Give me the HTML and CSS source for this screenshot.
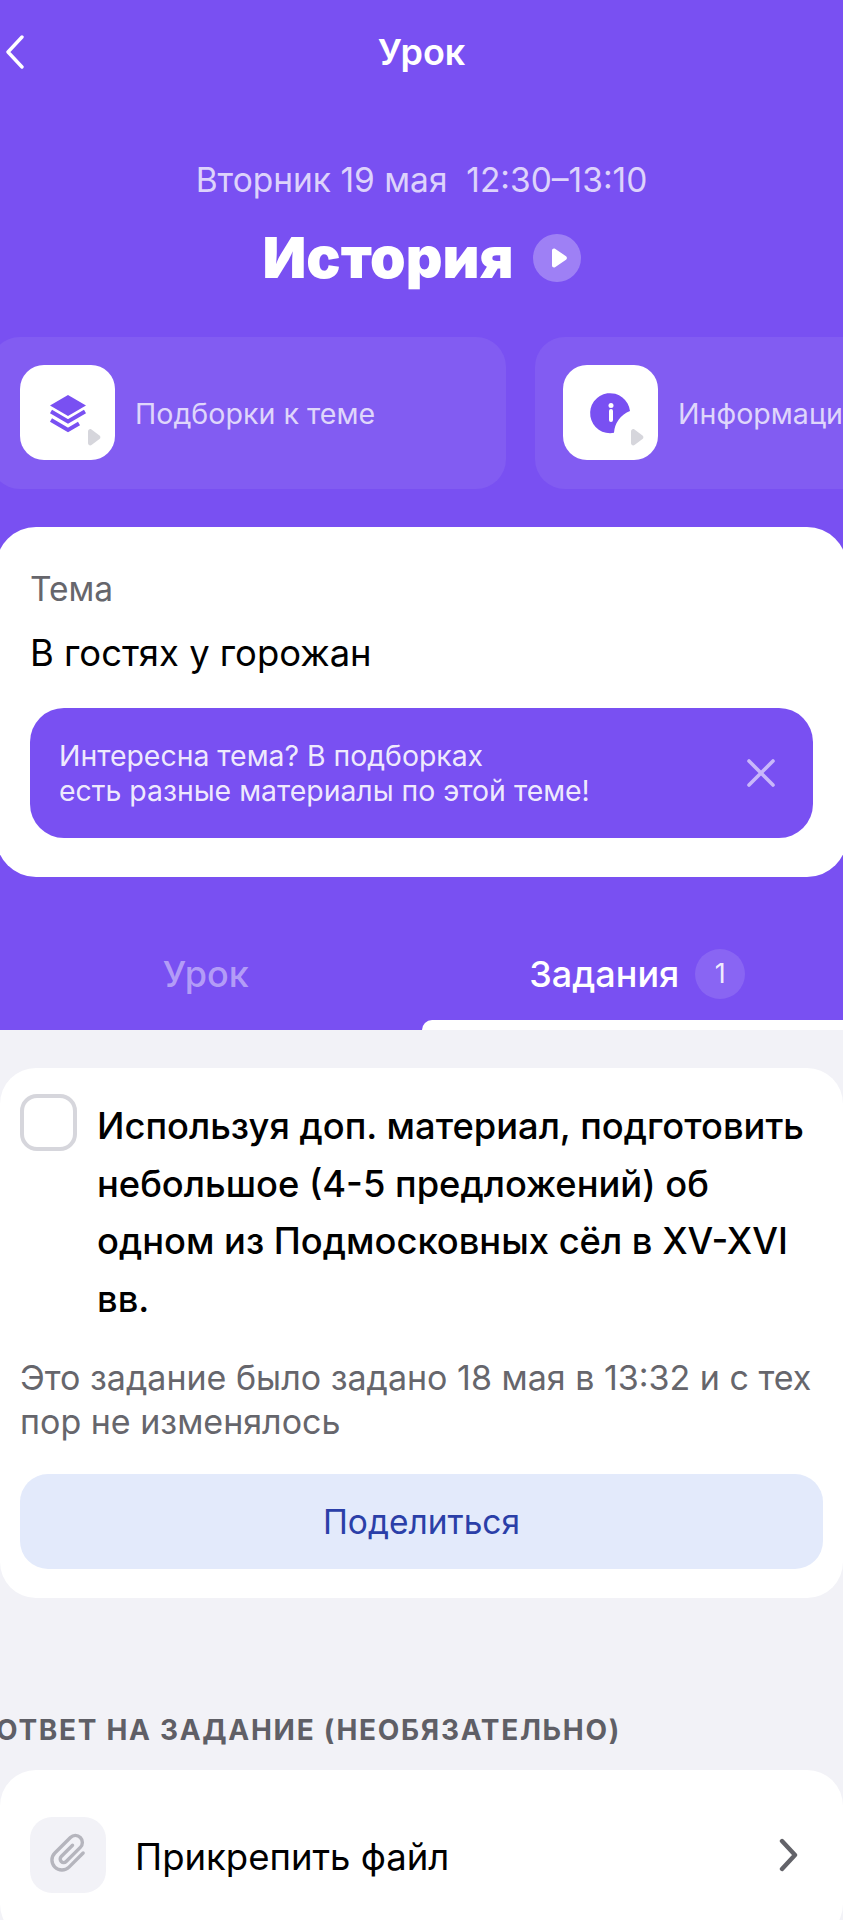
FILE: index.html
```html
<!DOCTYPE html>
<html lang="ru">
<head>
  <meta charset="UTF-8">
  <meta name="viewport" content="width=device-width, initial-scale=1.0">
  <title>Урок</title>
  <link rel="stylesheet" href="styles.css">
</head>
<body>
  <div class="hero">
    <div class="topbar">
      <svg class="back" width="20" height="34" viewBox="0 0 20 34"><path d="M17 2 3 17l14 15" fill="none" stroke="#fff" stroke-width="3.4" stroke-linecap="round" stroke-linejoin="round"/></svg>
      <span class="topbar-title">Урок</span>
    </div>
    <p class="lesson-date">Вторник 19 мая&nbsp; 12:30–13:10</p>
    <div class="subject">
      <h1>История</h1>
      <span class="subject-play">
        <svg width="48" height="48" viewBox="0 0 48 48"><path d="M19 16.500c0-1.600 1.700-2.500 3-1.700l11 7.400c1.200.8 1.200 2.700 0 3.500l-11 7.500c-1.300.8-3-.1-3-1.700z" fill="#fff"/></svg>
      </span>
    </div>
    <div class="shortcuts">
      <div class="shortcut shortcut-first">
        <div class="tile">
          <svg width="95" height="95" viewBox="0 0 95 95">
            <path d="M48 30 66 40.500 48 51 30 40.500z" fill="#7950f2"/>
            <path d="M31 46.500 48 56.500 65 46.500M31 55 48 65 59 58.500" fill="none" stroke="#7950f2" stroke-width="4"/>
            <path d="M68 66.500c0-2 2-3 3.500-2l8 6c1.200 1 1.200 2.500 0 3.500l-8 6c-1.500 1-3.500 0-3.500-2z" fill="#d6d6dc"/>
          </svg>
        </div>
        <span class="shortcut-label">Подборки к теме</span>
      </div>
      <div class="shortcut">
        <div class="tile">
          <svg width="95" height="95" viewBox="0 0 95 95">
            <path d="M67 46A20 20 0 1 0 51 67.800A25 25 0 0 1 67 46z" fill="#7950f2"/>
            <circle cx="48" cy="40.500" r="2.500" fill="#fff"/>
            <path d="M48 46v9" stroke="#fff" stroke-width="4" stroke-linecap="round"/>
            <path d="M68 66.500c0-2 2-3 3.500-2l8 6c1.200 1 1.200 2.500 0 3.500l-8 6c-1.500 1-3.500 0-3.500-2z" fill="#d6d6dc"/>
          </svg>
        </div>
        <span class="shortcut-label">Информация</span>
      </div>
    </div>
    <div class="topic-card">
      <p class="topic-label">Тема</p>
      <p class="topic-name">В гостях у горожан</p>
      <div class="banner">
        <p>Интересна тема? В подборках<br>есть разные материалы по этой теме!</p>
        <svg width="30" height="30" viewBox="0 0 30 30"><path d="M3 3l24 24M27 3 3 27" stroke="#c9b8fa" stroke-width="3.600" stroke-linecap="round"/></svg>
      </div>
    </div>
    <div class="tabs">
      <div class="tab">Урок</div>
      <div class="tab tab-active">Задания <span class="tab-count">1</span></div>
    </div>
  </div>

  <div class="content">
    <div class="card task-card">
      <div class="task">
        <span class="checkbox"></span>
        <p class="task-text">Используя доп. материал, подготовить небольшое (4-5 предложений) об одном из Подмосковных сёл в XV-XVI вв.</p>
      </div>
      <p class="task-meta">Это задание было задано 18 мая в 13:32 и с тех пор не изменялось</p>
      <button class="share">Поделиться</button>
    </div>

    <h2 class="section-title">ОТВЕТ НА ЗАДАНИЕ (НЕОБЯЗАТЕЛЬНО)</h2>

    <div class="card attach-card">
      <div class="attach-tile">
        <svg width="76" height="76" viewBox="0 0 76 76">
          <path transform="translate(1 -2) rotate(45 38 38)" d="M48 28v20a10 10 0 0 1-20 0V26a7 7 0 0 1 14 0v20a3.500 3.500 0 0 1-7 0V30" fill="none" stroke="#b5b5bd" stroke-width="3.400" stroke-linecap="round"/>
        </svg>
      </div>
      <span class="attach-label">Прикрепить файл</span>
      <svg class="chevron" width="20" height="34" viewBox="0 0 20 34"><path d="M3 3l13 14L3 31" fill="none" stroke="#636369" stroke-width="4.400" stroke-linecap="round" stroke-linejoin="round"/></svg>
    </div>
  </div>
</body>
</html>
```

FILE: styles.css
```css
* {
  box-sizing: border-box;
}

html, body {
  height: 100%;
}

body {
  margin: 0;
  padding: 0;
  font-family: Inter, "Noto Sans", sans-serif;
  background: #f2f2f7;
  color: #000;
  overflow: hidden;
}

p, h1, h2 {
  margin: 0;
}

.hero {
  height: 1030px;
  background: #7950f2;
  overflow: hidden;
}

.topbar {
  display: flex;
  align-items: center;
  justify-content: center;
  height: 34px;
  margin-top: 35px;
  position: relative;
}

.back {
  position: absolute;
  left: 5px;
  top: 0;
}

.topbar-title {
  color: #fff;
  font-size: 36px;
  font-weight: 600;
}

.lesson-date {
  margin-top: 91px;
  text-align: center;
  color: rgba(255, 255, 255, 0.75);
  font-size: 33.500px;
  line-height: 40px;
}

.subject {
  display: flex;
  align-items: center;
  justify-content: center;
  gap: 19px;
  margin-top: 23px;
  height: 70px;
}

.subject h1 {
  color: #fff;
  font-size: 57px;
  font-weight: 900;
  line-height: 70px;
}

.subject-play {
  display: flex;
  width: 48px;
  height: 48px;
  border-radius: 50%;
  background: rgba(255, 255, 255, 0.28);
}

.shortcuts {
  display: flex;
  gap: 29px;
  margin-top: 44px;
  margin-left: -10px;
  width: 1200px;
}

.shortcut {
  display: flex;
  align-items: center;
  gap: 20px;
  width: 600px;
  height: 152px;
  padding: 0 28px;
  background: rgba(255, 255, 255, 0.07);
  border-radius: 30px;
}

.shortcut-first {
  width: 516px;
  padding-left: 30px;
}

.tile {
  width: 95px;
  height: 95px;
  flex: none;
  margin-top: -1px;
  background: #fff;
  border-radius: 24px;
}

.tile svg {
  display: block;
}

.shortcut-label {
  color: rgba(255, 255, 255, 0.75);
  font-size: 28.600px;
  white-space: nowrap;
}

.topic-card {
  margin: 38px -4px 0;
  height: 350px;
  padding: 42px 34px 0;
  background: #fff;
  border-radius: 40px;
}

.topic-label {
  color: #66666c;
  font-size: 33.500px;
  line-height: 40px;
}

.topic-name {
  margin-top: 24px;
  font-size: 36.400px;
  line-height: 40px;
}

.banner {
  display: flex;
  align-items: center;
  justify-content: space-between;
  height: 130px;
  margin-top: 35px;
  padding: 0 37px 0 29px;
  background: #7950f2;
  border-radius: 34px;
  color: rgba(255, 255, 255, 0.9);
  font-size: 28.400px;
  line-height: 35px;
}

.tabs {
  display: flex;
  height: 153px;
}

.tab {
  flex: 1;
  display: flex;
  align-items: center;
  justify-content: center;
  gap: 16px;
  padding: 40px 10px 0 0;
  color: rgba(255, 255, 255, 0.45);
  font-size: 36px;
  font-weight: 500;
}

.tab-active {
  padding: 40px 0 0 10px;
  color: #fff;
  position: relative;
}

.tab-active::after {
  content: "";
  position: absolute;
  left: 0;
  right: 0;
  bottom: 0;
  height: 10px;
  background: #fff;
  border-top-left-radius: 10px;
}

.tab-count {
  display: flex;
  align-items: center;
  justify-content: center;
  width: 50px;
  height: 50px;
  border-radius: 50%;
  background: rgba(255, 255, 255, 0.12);
  color: rgba(255, 255, 255, 0.9);
  font-size: 27px;
  font-weight: 400;
}

.content {
  padding-top: 38px;
}

.card {
  background: #fff;
  border-radius: 36px;
}

.task-card {
  height: 530px;
  padding: 26px 20px 0;
}

.task {
  display: flex;
  align-items: flex-start;
  gap: 20px;
}

.checkbox {
  flex: none;
  width: 57px;
  height: 57px;
  border: 4px solid #d6d6dc;
  border-radius: 17px;
}

.task-text {
  font-size: 36.300px;
  font-weight: 460;
  line-height: 57.500px;
  margin-top: 4px;
}

.task-meta {
  margin-top: 28px;
  color: #66666c;
  font-size: 34px;
  line-height: 44px;
}

.share {
  display: block;
  width: 100%;
  height: 95px;
  margin-top: 30px;
  border: none;
  border-radius: 28px;
  background: #e3eafb;
  color: #2b3fa8;
  font-family: inherit;
  font-size: 33.500px;
}

.section-title {
  margin: 112px 0 0 -4px;
  height: 40px;
  color: #5f5f66;
  font-size: 28px;
  font-weight: 700;
  letter-spacing: 1.700px;
  line-height: 40px;
  white-space: nowrap;
}

.attach-card {
  display: flex;
  align-items: center;
  gap: 29px;
  height: 170px;
  margin-top: 20px;
  padding: 0 44px 0 30px;
}

.attach-tile {
  flex: none;
  width: 76px;
  height: 76px;
  background: #f2f2f7;
  border-radius: 22px;
}

.attach-tile svg {
  display: block;
}

.attach-label {
  flex: 1;
  padding-top: 3px;
  font-size: 36.500px;
}
```
